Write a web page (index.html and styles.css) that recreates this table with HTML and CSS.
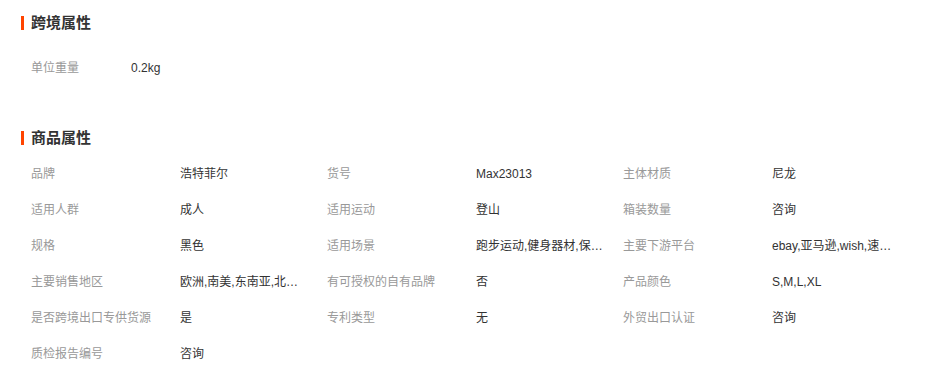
FILE: index.html
```html
<!DOCTYPE html>
<html lang="zh-CN">
<head>
<meta charset="utf-8">
<title>属性</title>
<link rel="stylesheet" href="styles.css">
</head>
<body>
<section class="section section-cross">
  <h2 class="title">跨境属性</h2>
  <div class="attrs">
    <div class="attr"><span class="label label-short">单位重量</span><span class="value">0.2kg</span></div>
  </div>
</section>
<section class="section section-goods">
  <h2 class="title">商品属性</h2>
  <div class="attrs">
    <div class="attr"><span class="label">品牌</span><span class="value">浩特菲尔</span></div>
    <div class="attr"><span class="label">货号</span><span class="value">Max23013</span></div>
    <div class="attr"><span class="label">主体材质</span><span class="value">尼龙</span></div>
    <div class="attr"><span class="label">适用人群</span><span class="value">成人</span></div>
    <div class="attr"><span class="label">适用运动</span><span class="value">登山</span></div>
    <div class="attr"><span class="label">箱装数量</span><span class="value">咨询</span></div>
    <div class="attr"><span class="label">规格</span><span class="value">黑色</span></div>
    <div class="attr"><span class="label">适用场景</span><span class="value">跑步运动,健身器材,保…</span></div>
    <div class="attr"><span class="label">主要下游平台</span><span class="value">ebay,亚马逊,wish,速…</span></div>
    <div class="attr"><span class="label">主要销售地区</span><span class="value">欧洲,南美,东南亚,北…</span></div>
    <div class="attr"><span class="label">有可授权的自有品牌</span><span class="value">否</span></div>
    <div class="attr"><span class="label">产品颜色</span><span class="value">S,M,L,XL</span></div>
    <div class="attr"><span class="label">是否跨境出口专供货源</span><span class="value">是</span></div>
    <div class="attr"><span class="label">专利类型</span><span class="value">无</span></div>
    <div class="attr"><span class="label">外贸出口认证</span><span class="value">咨询</span></div>
    <div class="attr"><span class="label">质检报告编号</span><span class="value">咨询</span></div>
  </div>
</section>
</body>
</html>
```
FILE: styles.css
```css
html, body {
  margin: 0;
  padding: 0;
  background: #fff;
}
body {
  font-family: "Liberation Sans", "Noto Sans CJK SC", sans-serif;
  font-size: 12px;
  color: #333;
  padding: 13px 0 0 21px;
}
.section-goods {
  margin-top: 42px;
}
.title {
  margin: 0;
  display: flex;
  align-items: center;
  gap: 7px;
  height: 20px;
  line-height: 20px;
  font-size: 15px;
  font-weight: bold;
  color: #333;
}
.title::before {
  content: "";
  display: block;
  width: 3px;
  height: 14px;
  background: #ff4400;
}
.section-cross .attrs {
  margin-top: 17px;
}
.section-goods .attrs {
  margin-top: 8px;
}
.attrs {
  display: grid;
  grid-template-columns: repeat(3, 296px);
  padding-left: 10px;
}
.attr {
  display: flex;
  height: 36px;
  line-height: 36px;
  white-space: nowrap;
}
.label {
  width: 149px;
  flex: none;
  color: #999;
}
.label-short {
  width: 100px;
}
.value {
  color: #333;
}
```
